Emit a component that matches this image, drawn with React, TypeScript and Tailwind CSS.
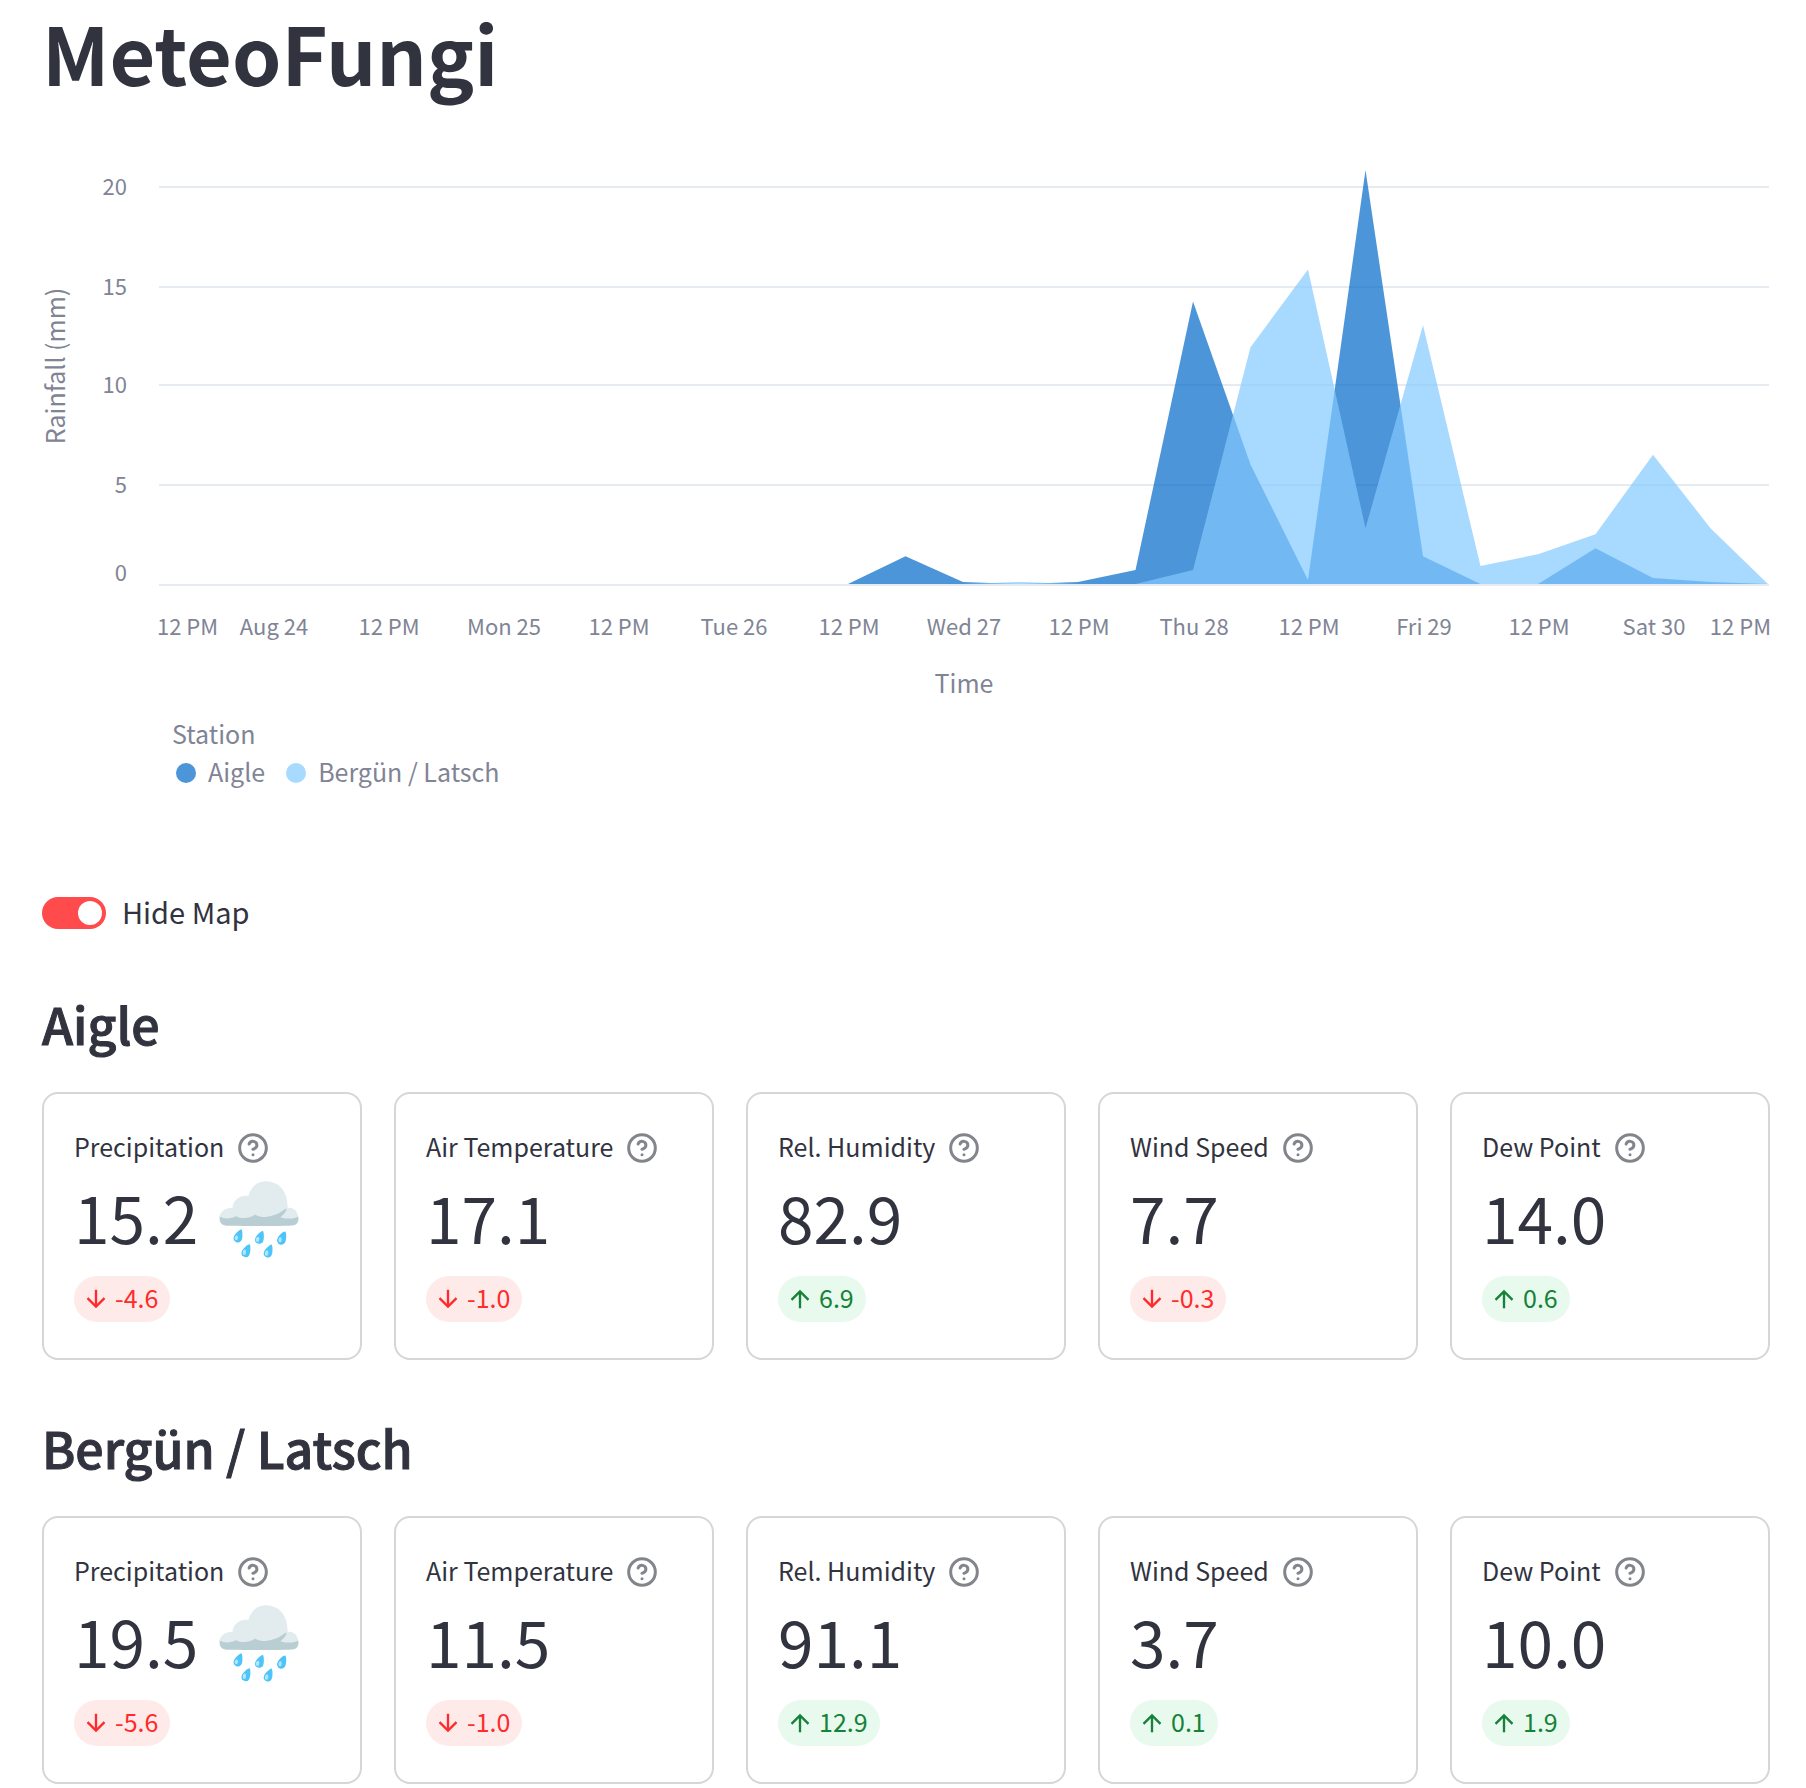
import { useState } from "react";
import { CircleHelp } from "lucide-react";

type Metric = {
  label: string;
  value: string;
  delta: string;
  up: boolean;
  rain?: boolean;
};

const stations: { name: string; metrics: Metric[] }[] = [
  {
    name: "Aigle",
    metrics: [
      { label: "Precipitation", value: "15.2", delta: "-4.6", up: false, rain: true },
      { label: "Air Temperature", value: "17.1", delta: "-1.0", up: false },
      { label: "Rel. Humidity", value: "82.9", delta: "6.9", up: true },
      { label: "Wind Speed", value: "7.7", delta: "-0.3", up: false },
      { label: "Dew Point", value: "14.0", delta: "0.6", up: true },
    ],
  },
  {
    name: "Bergün / Latsch",
    metrics: [
      { label: "Precipitation", value: "19.5", delta: "-5.6", up: false, rain: true },
      { label: "Air Temperature", value: "11.5", delta: "-1.0", up: false },
      { label: "Rel. Humidity", value: "91.1", delta: "12.9", up: true },
      { label: "Wind Speed", value: "3.7", delta: "0.1", up: true },
      { label: "Dew Point", value: "10.0", delta: "1.9", up: true },
    ],
  },
];

// Rainfall every six hours; the first twelve readings are dry.
const dry = Array<number>(12).fill(0);
const aigle = [...dry, 0, 1.4, 0.1, 0, 0.1, 0.7, 14.2, 6, 0.2, 20.8, 1.4, 0, 0, 1.8, 0.3, 0.1, 0];
const berguen = [...dry, 0, 0, 0, 0.1, 0, 0, 0.7, 11.9, 15.8, 2.8, 13, 0.9, 1.5, 2.5, 6.5, 2.8, 0];

const LEFT = 116;
const RIGHT = 1726;
const BASE = 464;
const UNIT = 19.9;
const STEP = (RIGHT - LEFT) / 28;

const days = [
  "12 PM", "Aug 24", "12 PM", "Mon 25", "12 PM", "Tue 26", "12 PM", "Wed 27",
  "12 PM", "Thu 28", "12 PM", "Fri 29", "12 PM", "Sat 30", "12 PM",
];

function areaPath(values: number[]) {
  const points = values.map((v, i) => `${LEFT + i * STEP},${BASE - v * UNIT}`);
  return `M${LEFT},${BASE}L${points.join("L")}L${RIGHT},${BASE}Z`;
}

function RainChart() {
  return (
    <svg
      viewBox="0 0 1728 594"
      className="block w-full overflow-visible"
      role="img"
      aria-label="Rainfall by station"
      fill="#808495"
    >
      {[20, 15, 10, 5, 0].map((v) => {
        // Snap to even pixels so the two-pixel grid lines stay crisp.
        const y = 2 * Math.ceil((BASE - v * UNIT) / 2 - 0.5) + 1;
        return (
          <g key={v}>
            <line x1={LEFT + 1} x2={RIGHT + 1} y1={y} y2={y} stroke="#e6eaf1" strokeWidth="2" />
            <text x="85" y={v === 0 ? y - 4 : y + 8} textAnchor="end" fontSize="22">
              {v}
            </text>
          </g>
        );
      })}
      <path d={areaPath(aigle)} fill="#0068c9" fillOpacity="0.7" />
      <path d={areaPath(berguen)} fill="#83c9ff" fillOpacity="0.7" />
      {days.map((d, i) => (
        <text
          key={i}
          x={i === 0 ? LEFT - 1 : i === 14 ? RIGHT + 3 : LEFT + i * 2 * STEP + 1}
          y="515"
          fontSize="22"
          textAnchor={i === 0 ? "start" : i === 14 ? "end" : "middle"}
        >
          {d}
        </text>
      ))}
      <text x="922" y="573" fontSize="25" textAnchor="middle">
        Time
      </text>
      <text transform="translate(23 246) rotate(-90)" fontSize="25" textAnchor="middle">
        Rainfall (mm)
      </text>
    </svg>
  );
}

function Delta({ value, up }: { value: string; up: boolean }) {
  return (
    <div
      className={
        "flex h-[46px] w-fit items-center gap-[5px] rounded-full pr-3 pl-2 text-[25px] leading-10 " +
        (up ? "bg-[#e8f9ee] text-[#158237]" : "bg-[#ffeaea] text-[#ff2b2b]")
      }
    >
      <svg viewBox="0 0 24 24" className="size-7" fill="currentColor" aria-hidden="true">
        {up ? (
          <path d="M4 12l1.41 1.41L11 7.83V20h2V7.83l5.58 5.59L20 12l-8-8-8 8z" />
        ) : (
          <path d="M20 12l-1.41-1.41L13 16.17V4h-2v12.17l-5.58-5.59L4 12l8 8 8-8z" />
        )}
      </svg>
      <span className="pb-[5px]">{value}</span>
    </div>
  );
}

function MetricCard({ metric }: { metric: Metric }) {
  return (
    <div className="min-w-0 rounded-2xl border-2 border-[#d6d6d9] px-[30px] pt-[30px] pb-9">
      <div className="flex h-12 items-center gap-[13px]">
        <span className="pb-[5px] text-[25px] leading-10 whitespace-nowrap">{metric.label}</span>
        <button type="button" aria-label={`Help for ${metric.label}`} className="text-[#83858c]">
          <CircleHelp className="size-8" strokeWidth={2.25} />
        </button>
      </div>
      <div className="mb-4 h-22 text-[64px] leading-[88px] whitespace-nowrap">
        {metric.value}
        {metric.rain && <span className="ml-4 text-[72px] leading-none">🌧️</span>}
      </div>
      <Delta value={metric.delta} up={metric.up} />
    </div>
  );
}

export default function App() {
  const [hidden, setHidden] = useState(true);
  return (
    <main className="min-h-screen bg-white pr-9 pb-1 pl-[42px] font-['Noto_Sans_CJK_SC','Noto_Color_Emoji',sans-serif] text-[#31333f]">
      <h1 className="text-[79px] leading-[104px] font-bold">MeteoFungi</h1>
      <div className="mt-4">
        <RainChart />
      </div>
      <div className="pl-[130px] text-[25px] leading-[38px] text-[#808495]">
        <div>Station</div>
        <div className="flex items-center">
          <span className="mt-1 mr-3 ml-1 size-5 rounded-full bg-[#4c95d9]" />
          <span>Aigle</span>
          <span className="mt-1 mr-3 ml-[21px] size-5 rounded-full bg-[#a8d9ff]" />
          <span>Bergün / Latsch</span>
        </div>
      </div>
      <label className="mt-[107px] mb-[7px] flex h-8 w-fit cursor-pointer items-center gap-4">
        <input
          type="checkbox"
          role="switch"
          checked={hidden}
          onChange={(e) => setHidden(e.target.checked)}
          className="h-8 w-16 appearance-none rounded-full bg-[#d6d6d9] p-1 before:block before:size-6 before:rounded-full before:bg-white checked:bg-[#ff4b4b] checked:before:ml-8"
        />
        <span className="pb-[5px] text-[29px] leading-8">Hide Map</span>
      </label>
      {stations.map((s) => (
        <section key={s.name} className="pt-[53px]">
          <h2 className="text-[50px] leading-[68px] font-medium [-webkit-text-stroke:1px_#31333f]">
            {s.name}
          </h2>
          <div className="mt-[35px] grid grid-cols-5 gap-8">
            {s.metrics.map((m) => (
              <MetricCard key={m.label} metric={m} />
            ))}
          </div>
        </section>
      ))}
    </main>
  );
}
